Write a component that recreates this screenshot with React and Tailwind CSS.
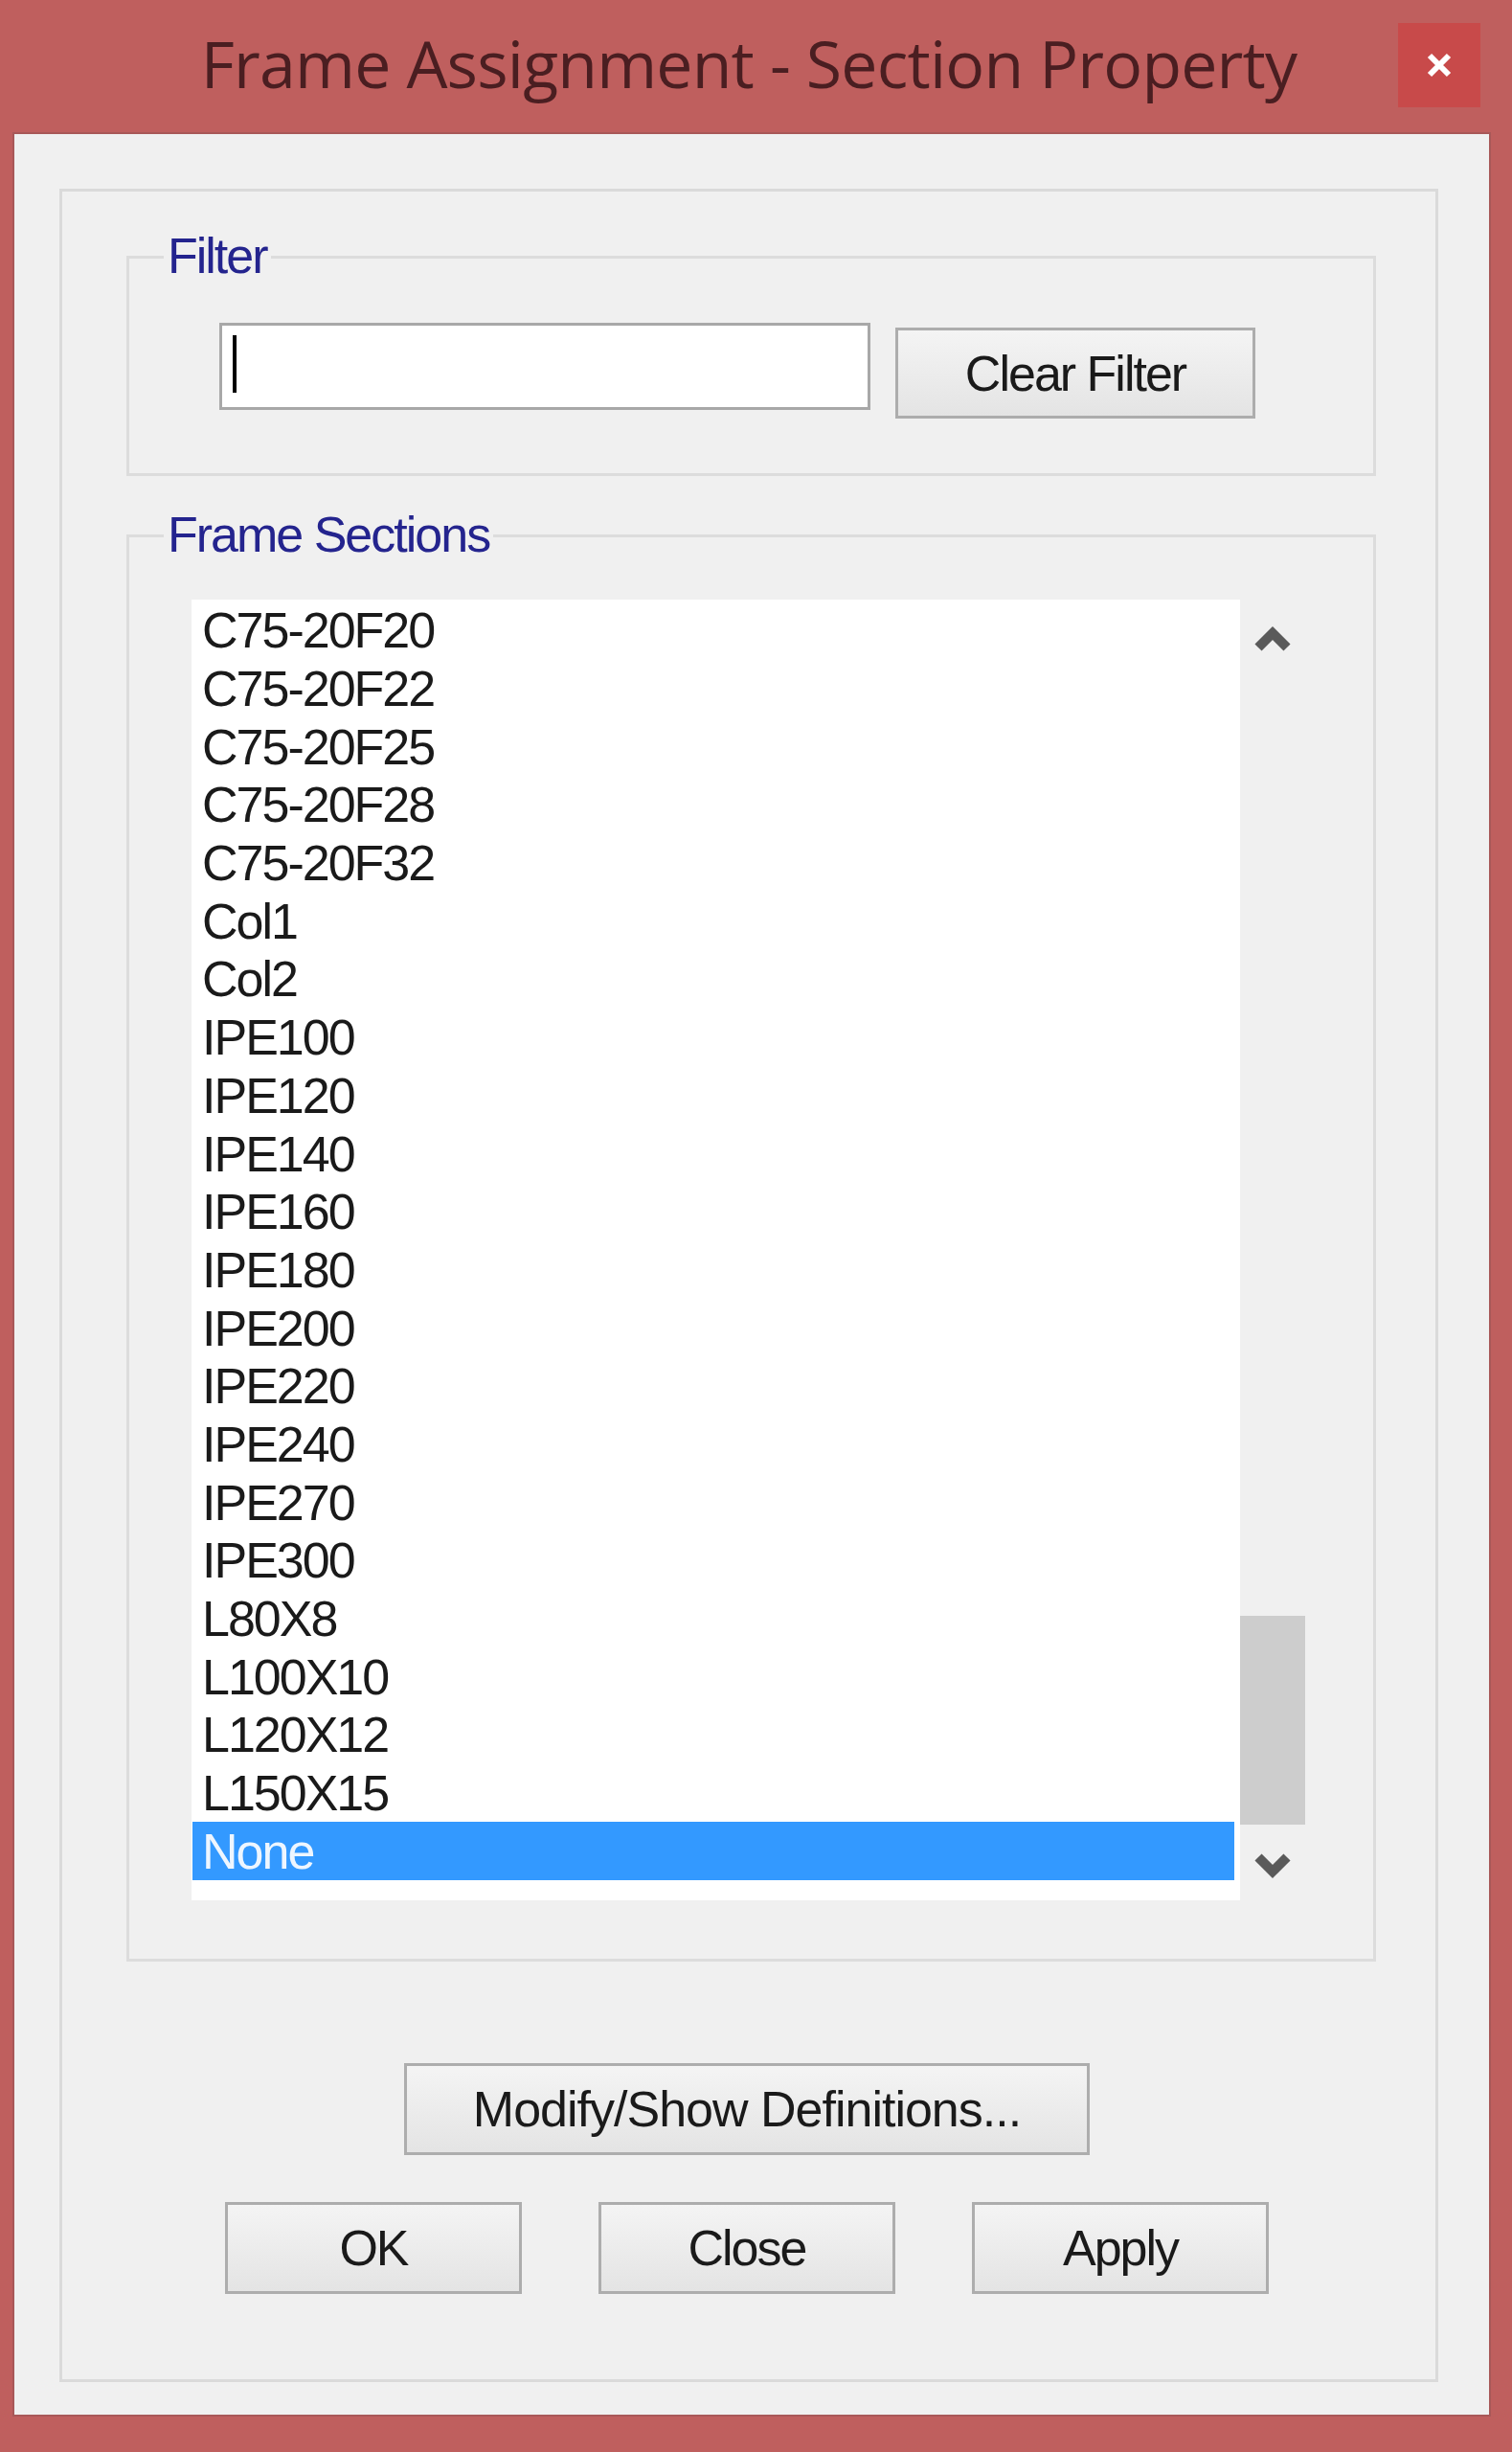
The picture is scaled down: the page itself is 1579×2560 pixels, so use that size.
import React from "react";

const sections = [
  "C75-20F20",
  "C75-20F22",
  "C75-20F25",
  "C75-20F28",
  "C75-20F32",
  "Col1",
  "Col2",
  "IPE100",
  "IPE120",
  "IPE140",
  "IPE160",
  "IPE180",
  "IPE200",
  "IPE220",
  "IPE240",
  "IPE270",
  "IPE300",
  "L80X8",
  "L100X10",
  "L120X12",
  "L150X15",
  "None",
];

const sans = "font-['Liberation_Sans',Arial,sans-serif]";

const Button = ({ children, className = "", tracking = "tracking-[-2px]" }) => (
  <div
    className={`flex items-center justify-center border-[3px] border-[#adadad] bg-linear-to-b from-[#f4f4f4] to-[#e4e4e4] text-[52px] text-[#1a1a1a] ${tracking} ${sans} ${className}`}
  >
    {children}
  </div>
);

const GroupLabel = ({ children, className = "" }) => (
  <span
    className={`absolute bg-[#f0f0f0] px-[4px] text-[52px] leading-[52px] tracking-[-2px] text-[#24248e] ${sans} ${className}`}
  >
    {children}
  </span>
);

const Chevron = ({ down }) => (
  <svg width="38" height="32" viewBox="0 0 38 32">
    <polyline
      points={down ? "4,8 19,23 34,8" : "4,24 19,9 34,24"}
      fill="none"
      stroke="#5a5a5a"
      strokeWidth="10"
      strokeLinejoin="miter"
    />
  </svg>
);

export default function App() {
  return (
    <div className="w-[1579px] h-[2560px] bg-[#bf5f5e] overflow-hidden">
      {/* title bar */}
      <div className="relative h-[138px] flex justify-center pt-[32px] pr-[15px]">
        <span className="font-['Open_Sans',sans-serif] text-[68px] leading-none tracking-[-0.8px] text-[#4a1e21]">
          Frame Assignment - Section Property
        </span>
        <div className="absolute left-[1460px] top-[24px] w-[86px] h-[88px] bg-[#c84a4a] flex items-center justify-center">
          <svg width="26" height="26" viewBox="0 0 26 26">
            <path d="M3 3 L23 23 M23 3 L3 23" stroke="#ffffff" strokeWidth="6" />
          </svg>
        </div>
      </div>

      {/* client area */}
      <div className="ml-[13px] w-[1544px] h-[2385px] border-2 border-[#a85858] bg-[#f0f0f0] pt-[57px] pl-[47px]">
        <div className="w-[1440px] h-[2290px] border-[3px] border-[#dadada] pt-[67px] pl-[67px]">
          {/* Filter */}
          <div className="relative w-[1305px] h-[230px] border-[3px] border-[#dcdcdc]">
            <GroupLabel className="left-[36px] top-[-29px]">Filter</GroupLabel>
            <div className="flex items-start pl-[94px]">
              <div className="mt-[67px] w-[680px] h-[91px] border-[3px] border-[#a8a8a8] bg-white pl-[11px] pt-[10px]">
                <div className="w-[4px] h-[60px] bg-black" />
              </div>
              <Button className="ml-[26px] mt-[72px] w-[376px] h-[95px]">Clear Filter</Button>
            </div>
          </div>

          {/* Frame Sections */}
          <div className="relative mt-[61px] w-[1305px] h-[1490px] border-[3px] border-[#dcdcdc] pt-[65px] pl-[65px]">
            <GroupLabel className="left-[36px] top-[-29px]">Frame Sections</GroupLabel>
            <div className="flex h-[1358px]">
              <div className="w-[1095px] h-full bg-white pt-[2px] pl-[1px] pr-[6px] overflow-hidden">
                {sections.map((s) => (
                  <div
                    key={s}
                    className={`h-[60.7px] flex items-center pl-[10px] text-[52px] tracking-[-2px] ${sans} ${
                      s === "None" ? "bg-[#3399ff] text-[#eef6ff]" : "text-[#1a1a1a]"
                    }`}
                  >
                    {s}
                  </div>
                ))}
              </div>
              <div className="w-[68px] h-full flex flex-col">
                <div className="h-[84px] flex items-center justify-center">
                  <Chevron />
                </div>
                <div className="flex-1 flex flex-col justify-end">
                  <div className="h-[218px] bg-[#cdcdcd]" />
                </div>
                <div className="h-[79px] flex items-center justify-center pt-[4px]">
                  <Chevron down />
                </div>
              </div>
            </div>
          </div>

          {/* buttons */}
          <Button className="mt-[106px] ml-[290px] w-[716px] h-[96px]" tracking="tracking-[-1px]">
            Modify/Show Definitions...
          </Button>
          <div className="mt-[49px] ml-[103px] flex gap-[80px]">
            <Button className="w-[310px] h-[96px]">OK</Button>
            <Button className="w-[310px] h-[96px]">Close</Button>
            <Button className="w-[310px] h-[96px]">Apply</Button>
          </div>
        </div>
      </div>
    </div>
  );
}
